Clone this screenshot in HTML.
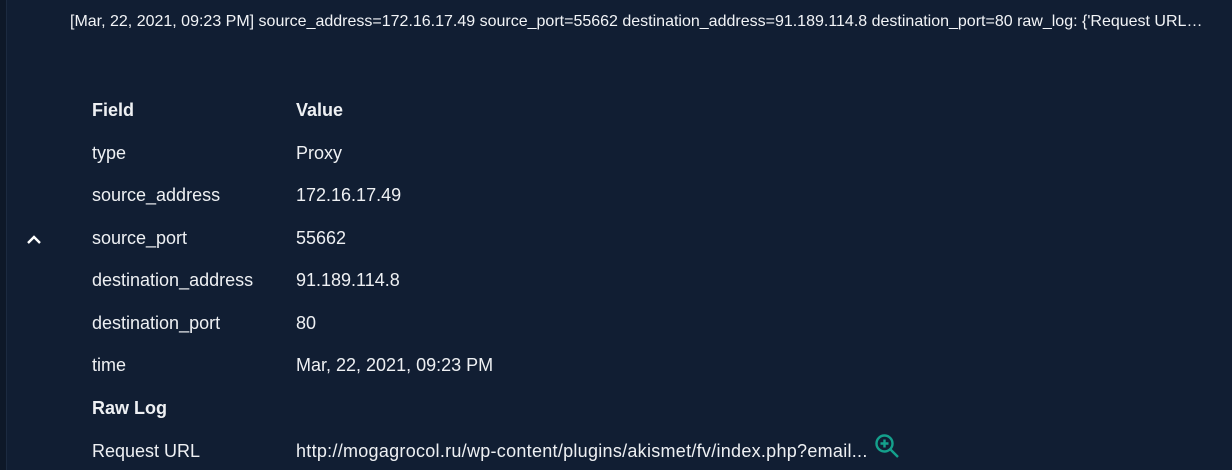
<!DOCTYPE html>
<html><head><style>
html,body{margin:0;padding:0}
body{width:1232px;height:470px;background:#111e33;font-family:"Liberation Sans",Roboto,sans-serif;color:#fff;position:relative;overflow:hidden}
.strip{position:absolute;left:0;top:0;width:6px;height:470px;background:#0e1828;border-right:1px solid #1c2a40}
.top{position:absolute;left:70px;top:13px;font-size:16px;white-space:nowrap;width:1133px;overflow:hidden;text-overflow:ellipsis;color:#f2f4f7}
.row{position:absolute;left:92px;font-size:18px;color:#eef0f3}
.v{position:absolute;left:296px;font-size:18px;color:#eef0f3;white-space:nowrap}
b{font-weight:bold}
</style></head><body>
<div class="strip"></div>
<div class="top">[Mar, 22, 2021, 09:23 PM] source_address=172.16.17.49 source_port=55662 destination_address=91.189.114.8 destination_port=80 raw_log: {'Request URL': 'http://mogagrocol.ru/wp-content'}</div>
<svg style="position:absolute;left:26px;top:234px" width="16" height="12" viewBox="0 0 16 12"><path d="M2 9 L8 3 L14 9" stroke="#fff" stroke-width="2.4" fill="none"/></svg>
<div class="row" style="top:100px"><b>Field</b></div><div class="v" style="top:100px"><b>Value</b></div>
<div class="row" style="top:143px">type</div><div class="v" style="top:143px">Proxy</div>
<div class="row" style="top:185px">source_address</div><div class="v" style="top:185px">172.16.17.49</div>
<div class="row" style="top:228px">source_port</div><div class="v" style="top:228px">55662</div>
<div class="row" style="top:270px">destination_address</div><div class="v" style="top:270px">91.189.114.8</div>
<div class="row" style="top:313px">destination_port</div><div class="v" style="top:313px">80</div>
<div class="row" style="top:355px">time</div><div class="v" style="top:355px">Mar, 22, 2021, 09:23 PM</div>
<div class="row" style="top:398px"><b>Raw Log</b></div>
<div class="row" style="top:441px">Request URL</div><div class="v" style="top:441px;letter-spacing:0.28px">http://mogagrocol.ru/wp-content/plugins/akismet/fv/index.php?email...</div>
<svg style="position:absolute;left:873px;top:432px" width="28" height="28" viewBox="0 0 28 28"><circle cx="11.5" cy="11.5" r="8" stroke="#14a08c" stroke-width="2.4" fill="none"/><path d="M17.5 17.5 L25 25 M11.5 7.5 V15.5 M7.5 11.5 H15.5" stroke="#14a08c" stroke-width="2.4" fill="none"/></svg>
</body></html>
